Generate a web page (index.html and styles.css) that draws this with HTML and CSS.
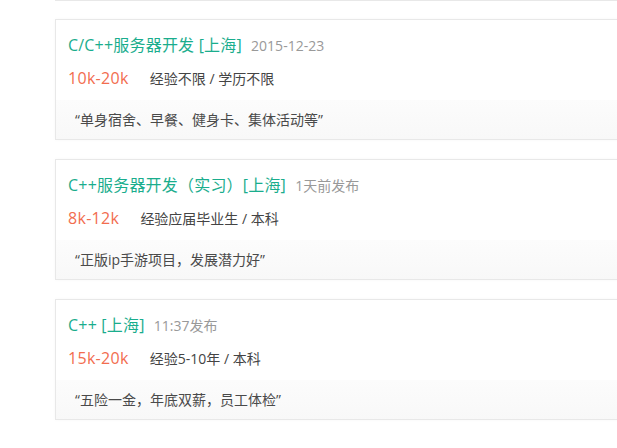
FILE: index.html
```html
<!doctype html>
<html>
<head>
<meta charset="utf-8">
<title>职位列表</title>
<link rel="stylesheet" href="styles.css">
</head>
<body>
    <div class="job-list">
        <div class="job-tail"></div>

        <div class="job">
            <div class="job-top">
                <div class="job-title">
                    <a href="#" class="job-name">C/C++服务器开发 [上海]</a>
                    <span class="job-time">2015-12-23</span>
                </div>
                <div class="job-info">
                    <span class="salary">10k-20k</span>
                    <span class="require">经验不限 / 学历不限</span>
                </div>
            </div>
            <div class="job-quote">“单身宿舍、早餐、健身卡、集体活动等”</div>
        </div>

        <div class="job">
            <div class="job-top">
                <div class="job-title">
                    <a href="#" class="job-name">C++服务器开发（实习）[上海]</a>
                    <span class="job-time">1天前发布</span>
                </div>
                <div class="job-info">
                    <span class="salary">8k-12k</span>
                    <span class="require">经验应届毕业生 / 本科</span>
                </div>
            </div>
            <div class="job-quote">“正版ip手游项目，发展潜力好”</div>
        </div>

        <div class="job">
            <div class="job-top">
                <div class="job-title">
                    <a href="#" class="job-name">C++ [上海]</a>
                    <span class="job-time">11:37发布</span>
                </div>
                <div class="job-info">
                    <span class="salary">15k-20k</span>
                    <span class="require">经验5-10年 / 本科</span>
                </div>
            </div>
            <div class="job-quote">“五险一金，年底双薪，员工体检”</div>
        </div>
    </div>
</body>
</html>
```
FILE: styles.css
```css
*{
    padding: 0px;
    margin: 0px;
    box-sizing: border-box;
}
body{
    background-color: white;
    font-family: "Open Sans", "Noto Sans CJK SC", sans-serif;
    overflow: hidden;
}
.job-list{
    padding-left: 55px;
}
.job-tail{
    width: 700px;
    height: 1px;
    border-bottom: 1px solid #e8e8e8;
    margin-bottom: 18px;
}
.job{
    width: 700px;
    border: 1px solid #e8e8e8;
    margin-bottom: 19px;
    box-shadow: 0px 0px 4px 0px rgba(0,0,0,0.03);
}
.job-top{
    padding: 15px 12px 11px;
}
.job-title{
    height: 21px;
    line-height: 21px;
    white-space: nowrap;
}
.job-name{
    font-size: 16px;
    color: #1aad8d;
    text-decoration: none;
    letter-spacing: 0.2px;
}
.job-time{
    font-size: 14px;
    color: #999;
    margin-left: 5px;
}
.job-info{
    margin-top: 12px;
    height: 21px;
    line-height: 21px;
    white-space: nowrap;
}
.salary{
    font-size: 16px;
    color: #f26d4f;
    letter-spacing: 0.3px;
}
.require{
    font-size: 14px;
    color: #444;
    margin-left: 17px;
}
.job-quote{
    height: 39px;
    line-height: 40px;
    padding-left: 19px;
    font-size: 14px;
    color: #4a4a4a;
    background: linear-gradient(#fcfcfc, #f8f8f8);
}
```
